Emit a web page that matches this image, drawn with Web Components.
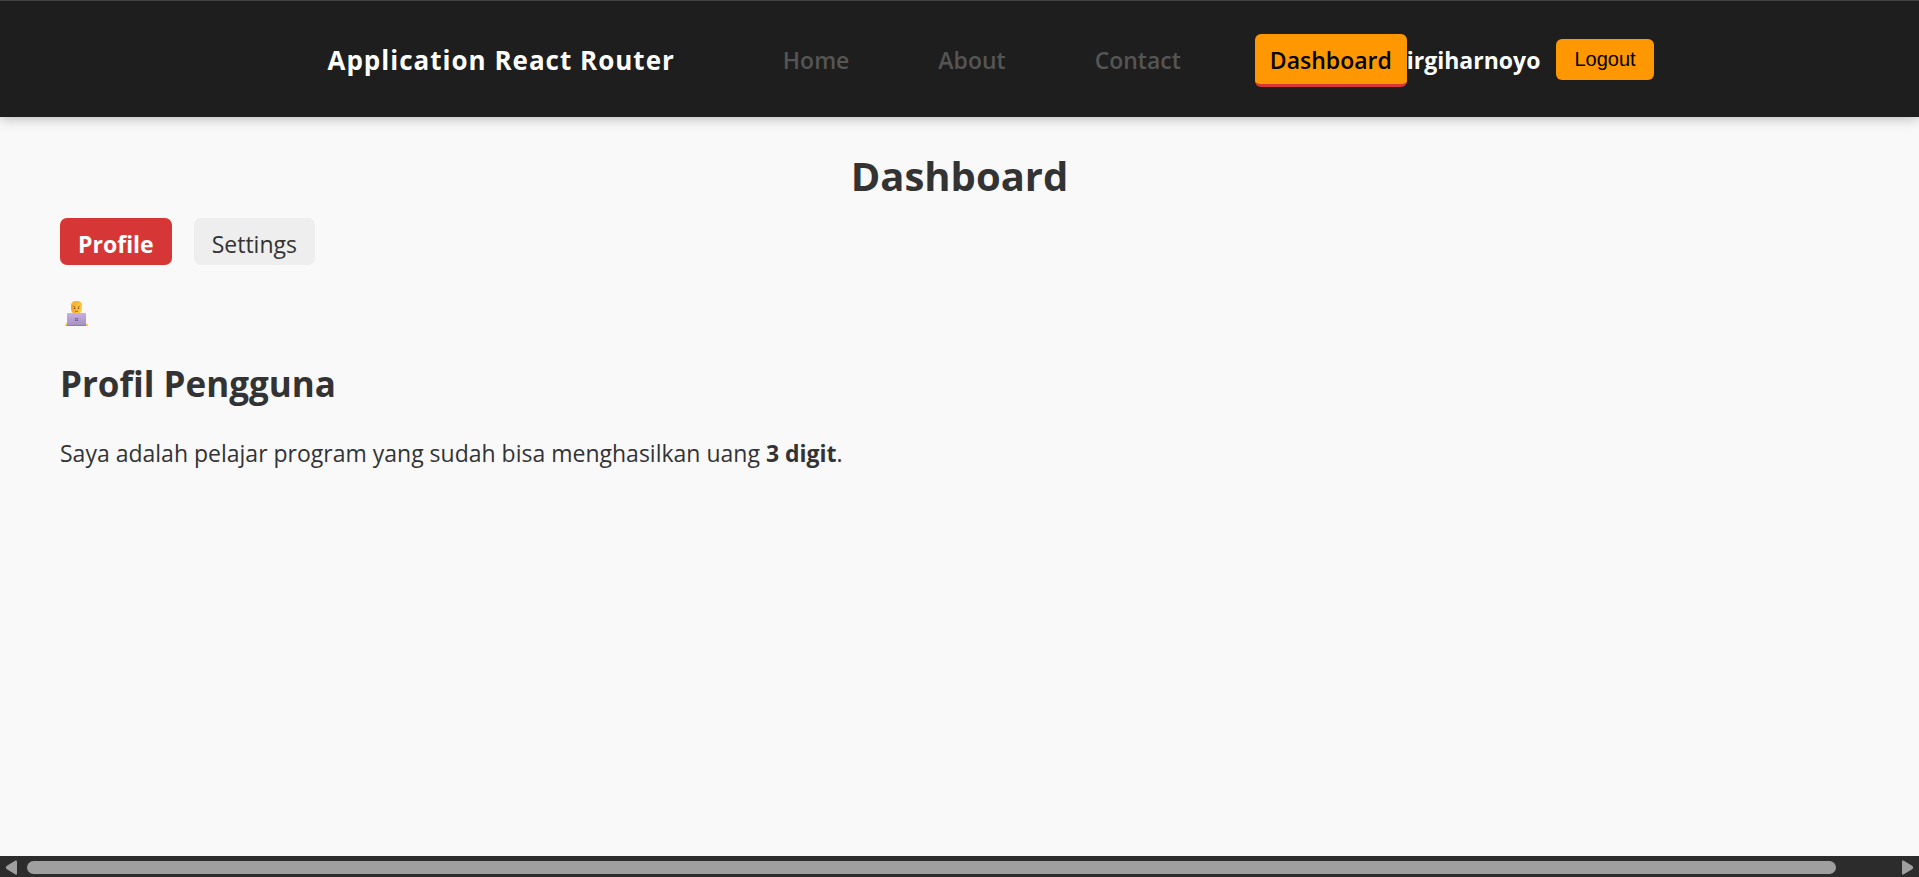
<!DOCTYPE html>
<html lang="id">
<head>
<meta charset="utf-8">
<title>Application React Router</title>
<style>
  body { margin: 0; font-family: "Open Sans", "Noto Sans", sans-serif; font-size: 23px; line-height: 32px; color: #333; background: #f9f9f9; }
</style>
</head>
<body>
<app-shell>
  <app-header slot="header" brand="Application React Router" user="irgiharnoyo">
    <nav-link href="#home">Home</nav-link>
    <nav-link href="#about">About</nav-link>
    <nav-link href="#contact">Contact</nav-link>
    <nav-link href="#dashboard" active>Dashboard</nav-link>
  </app-header>
  <dashboard-page heading="Dashboard">
    <tab-link slot="tabs" href="#profile" active>Profile</tab-link>
    <tab-link slot="tabs" href="#settings">Settings</tab-link>
    <user-profile heading="Profil Pengguna">Saya adalah pelajar program yang sudah bisa menghasilkan uang <strong>3 digit</strong>.</user-profile>
  </dashboard-page>
  <scroll-track slot="footer"></scroll-track>
</app-shell>
<script>
class BaseElement extends HTMLElement {
  connectedCallback() {
    if (!this.shadowRoot) this.attachShadow({ mode: "open" }).innerHTML = this.render();
  }
  attr(name) { return this.getAttribute(name) || ""; }
}

customElements.define("app-shell", class extends BaseElement {
  render() {
    return `<style>
      :host { display: flex; flex-direction: column; min-height: 100vh; }
      main { flex: 1; }
    </style>
    <slot name="header"></slot><main><slot></slot></main><slot name="footer"></slot>`;
  }
});

customElements.define("app-header", class extends BaseElement {
  render() {
    return `<style>
      :host { display: block; background: #1e1e1e; border-top: 1px solid #444; box-shadow: 0 2px 12px rgba(0, 0, 0, .25); }
      header { display: flex; align-items: center; justify-content: center; box-sizing: border-box; height: 116px; padding: 2px 0 0 62px; }
      .brand { color: #fff; font-size: 26px; font-weight: 700; letter-spacing: 1px; margin-right: 93px; white-space: nowrap; }
      nav { display: flex; align-items: center; gap: 59px; }
      .user { color: #fff; font-weight: 700; margin-right: 16px; }
      button { border: 0; border-radius: 6px; background: #ff9800; color: #000; padding: 0 18px; height: 41px; margin-bottom: 2px; font: 20px "Liberation Sans", Arial, sans-serif; }
    </style>
    <header>
      <div class="brand">${this.attr("brand")}</div>
      <nav><slot></slot></nav>
      <span class="user">${this.attr("user")}</span>
      <button type="button">Logout</button>
    </header>`;
  }
});

customElements.define("nav-link", class extends BaseElement {
  render() {
    return `<style>
      :host { display: block; }
      a { display: block; padding: 10px 15px 8px; border-bottom: 3px solid transparent; border-radius: 6px; color: #555; font-weight: 600; text-decoration: none; }
      :host([active]) a { background: #ff9800; color: #000; border-bottom-color: #d63636; }
    </style>
    <a href="${this.attr("href")}"><slot></slot></a>`;
  }
});

customElements.define("dashboard-page", class extends BaseElement {
  render() {
    return `<style>
      :host { display: block; padding: 35px 60px; }
      h1 { margin: 0; font-size: 40px; line-height: 48px; text-align: center; }
      nav { display: flex; gap: 22px; margin: 18px 0 33px; }
    </style>
    <h1>${this.attr("heading")}</h1>
    <nav><slot name="tabs"></slot></nav>
    <slot></slot>`;
  }
});

customElements.define("tab-link", class extends BaseElement {
  render() {
    return `<style>
      :host { display: block; }
      a { display: block; padding: 10px 18px 5px; border-radius: 7px; background: #eee; color: #333; text-decoration: none; }
      :host([active]) a { background: #d63636; color: #fff; font-weight: 700; }
    </style>
    <a href="${this.attr("href")}"><slot></slot></a>`;
  }
});

customElements.define("user-profile", class extends BaseElement {
  render() {
    return `<style>
      :host { display: block; }
      svg { display: block; width: 32px; height: 32px; }
      h2 { margin: 30px 0 29px; font-size: 35px; line-height: 48px; }
      p { margin: 0; }
    </style>
    <svg viewBox="0 0 32 32" role="img" aria-label="Pengguna dengan laptop">
      <defs>
        <linearGradient id="lid" x1="0" y1="0" x2="0" y2="1"><stop offset="0" stop-color="#c6b1df"/><stop offset="1" stop-color="#a58fc4"/></linearGradient>
        <linearGradient id="face" x1="0" y1="0" x2="1" y2="0"><stop offset="0" stop-color="#f3a526"/><stop offset="1" stop-color="#ffd23d"/></linearGradient>
      </defs>
      <path d="M5 28q0-3 3-3h17q3 0 3 3z" fill="#fbc53a"/>
      <rect x="11" y="3" width="11" height="13" rx="5" fill="url(#face)"/>
      <path d="M11 8q0-5 5.500-5t5.500 5q-2-3-4-3-5 0-7 3z" fill="#f5b93c"/>
      <path d="M13 8.500h2M18 8.500h2" stroke="#b9712a" stroke-width=".7"/>
      <circle cx="14.500" cy="10.300" r=".8" fill="#6b3e35"/><circle cx="18.500" cy="10.300" r=".8" fill="#6b3e35"/>
      <path d="M15 13q1.500 1 3 0" stroke="#d23f4b" fill="none"/>
      <rect x="7" y="15" width="19" height="13" rx="1" fill="url(#lid)"/>
      <path d="M7 27.500h19" stroke="#8f7da8"/>
      <path d="M15 20h1.300v1.300H15zM16.800 20h1.300v1.300h-1.300zM15 21.800h1.300v1.300H15zM16.800 21.800h1.300v1.300h-1.300z" fill="#705b8c"/>
    </svg>
    <h2>${this.attr("heading")}</h2>
    <p><slot></slot></p>`;
  }
});

customElements.define("scroll-track", class extends BaseElement {
  render() {
    return `<style>
      :host { display: flex; align-items: center; height: 21px; padding: 0 5px; gap: 10px; background: #2c2c2c; }
      svg { width: 12px; height: 15px; fill: #9f9f9f; flex: none; margin-top: 2px; }
      .track { flex: 1; padding-top: 2px; }
      .thumb { width: 97%; height: 13px; border-radius: 7px; background: #9f9f9f; }
    </style>
    <svg viewBox="0 0 12 15"><path d="M10.500.5Q12 0 12 1.500v12Q12 15 10.500 14.500L1.500 9Q0 7.500 1.500 6z"/></svg>
    <div class="track"><div class="thumb"></div></div>
    <svg viewBox="0 0 12 15"><path d="M1.500.5Q0 0 0 1.500v12Q0 15 1.500 14.500L10.500 9Q12 7.500 10.500 6z"/></svg>`;
  }
});
</script>
</body>
</html>
